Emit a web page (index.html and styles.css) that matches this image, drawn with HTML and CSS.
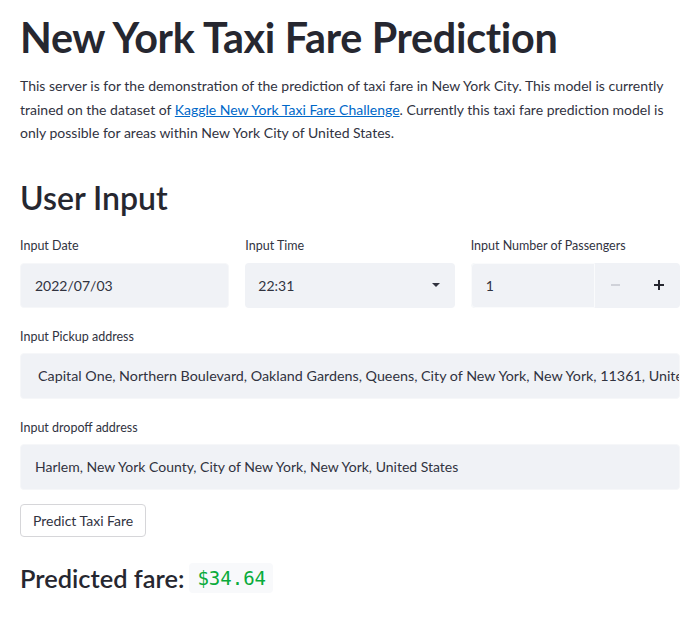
FILE: index.html
```html
<!DOCTYPE html>
<html>
<head>
<meta charset="utf-8">
<link rel="stylesheet" href="styles.css">
</head>
<body>
<main class="page">
  <h1 class="title">New York Taxi Fare Prediction</h1>
  <p class="intro">This server is for the demonstration of the prediction of taxi fare in New York City. This model is currently trained on the dataset of <a href="#">Kaggle New York Taxi Fare Challenge</a>. Currently this taxi fare prediction model is only possible for areas within New York City of United States.</p>
  <h2 class="section">User Input</h2>
  <div class="row">
    <div class="field">
      <label class="label">Input Date</label>
      <div class="box box-border"><span>2022/07/03</span></div>
    </div>
    <div class="field">
      <label class="label">Input Time</label>
      <div class="box select"><span>22:31</span><svg class="caret" width="8" height="4" viewBox="0 0 8 4"><path d="M0 0h8L4 4z" fill="#31333f"/></svg></div>
    </div>
    <div class="field">
      <label class="label">Input Number of Passengers</label>
      <div class="box number">
        <div class="num-in"><span>1</span></div>
        <div class="step minus"><svg width="9" height="2" viewBox="0 0 9 2"><rect width="9" height="2" fill="#d0d2d9"/></svg></div>
        <div class="step plus"><svg width="10" height="10" viewBox="0 0 10 10"><path d="M4 0h2v4h4v2H6v4H4V6H0V4h4z" fill="#262730"/></svg></div>
      </div>
    </div>
  </div>
  <div class="field wide">
    <label class="label">Input Pickup address</label>
    <div class="box box-border text pickup"><span>Capital One, Northern Boulevard, Oakland Gardens, Queens, City of New York, New York, 11361, United States</span></div>
  </div>
  <div class="field wide">
    <label class="label">Input dropoff address</label>
    <div class="box box-border text"><span>Harlem, New York County, City of New York, New York, United States</span></div>
  </div>
  <button class="btn">Predict Taxi Fare</button>
  <h3 class="result">Predicted fare: <code class="fare">$34.64</code></h3>
</main>
</body>
</html>
```

FILE: styles.css
```css
html, body {
  margin: 0;
  padding: 0;
  background: #ffffff;
}
body {
  font-family: "Lato", "Liberation Sans", sans-serif;
  color: #31333f;
}
.page {
  width: 660px;
  padding: 0 0 0 20px;
  box-sizing: content-box;
}
.title {
  margin: 0;
  padding-top: 13px;
  font-size: 41.3px;
  line-height: 48px;
  font-weight: 700;
  letter-spacing: -0.3px;
  color: #262730;
}
.intro {
  margin: 13px 0 0 0;
  font-size: 14px;
  line-height: 23.5px;
  color: #31333f;
}
.intro a {
  color: #0068c9;
}
.section {
  margin: 33px 0 0 0;
  font-size: 32px;
  line-height: 40px;
  font-weight: 600;
  color: #262730;
}
.row {
  display: flex;
  gap: 16px;
  margin-top: 20px;
}
.row .field {
  flex: 1;
}
.field {
  display: flex;
  flex-direction: column;
}
.wide {
  margin-top: 21px;
}
.label {
  font-size: 12.5px;
  line-height: 16px;
  height: 25px;
  color: #31333f;
}
.wide .label {
  height: 24px;
}
.box {
  height: 45px;
  background: #f0f2f6;
  border-radius: 4px;
  box-sizing: border-box;
  display: flex;
  align-items: center;
  font-size: 14px;
  color: #31333f;
  overflow: hidden;
  white-space: nowrap;
}
.box-border {
  border: 1px solid #f6f7f9;
  padding: 0 14px;
}
.text {
  height: 46px;
}
.pickup {
  padding-left: 17px;
  font-size: 14.3px;
}
.select {
  padding: 0 14px 0 13px;
  justify-content: space-between;
}
.caret {
  margin-right: 1px;
}
.number {
  padding: 0;
}
.num-in {
  width: 124px;
  height: 45px;
  box-sizing: border-box;
  border: 1px solid #fafbfc;
  border-radius: 4px 0 0 4px;
  display: flex;
  align-items: center;
  padding-left: 14px;
}
.step {
  flex: 1;
  height: 100%;
  display: flex;
  align-items: center;
  justify-content: center;
}
.btn {
  display: block;
  margin-top: 14px;
  font-family: inherit;
  font-size: 14px;
  color: #31333f;
  background: #ffffff;
  border: 1px solid #d6d6d9;
  border-radius: 4px;
  padding: 0 12px;
  height: 33px;
  cursor: pointer;
}
.result {
  margin: 26px 0 0 0;
  font-size: 25.4px;
  line-height: 30px;
  font-weight: 600;
  color: #262730;
  display: flex;
  align-items: center;
  gap: 5px;
}
.fare {
  font-family: "DejaVu Sans Mono", monospace;
  font-size: 19px;
  font-weight: 400;
  color: #09ab3b;
  background: #f8f9fb;
  border-radius: 4px;
  padding: 0 7px 0 8px;
  height: 30px;
  line-height: 30px;
}
```
